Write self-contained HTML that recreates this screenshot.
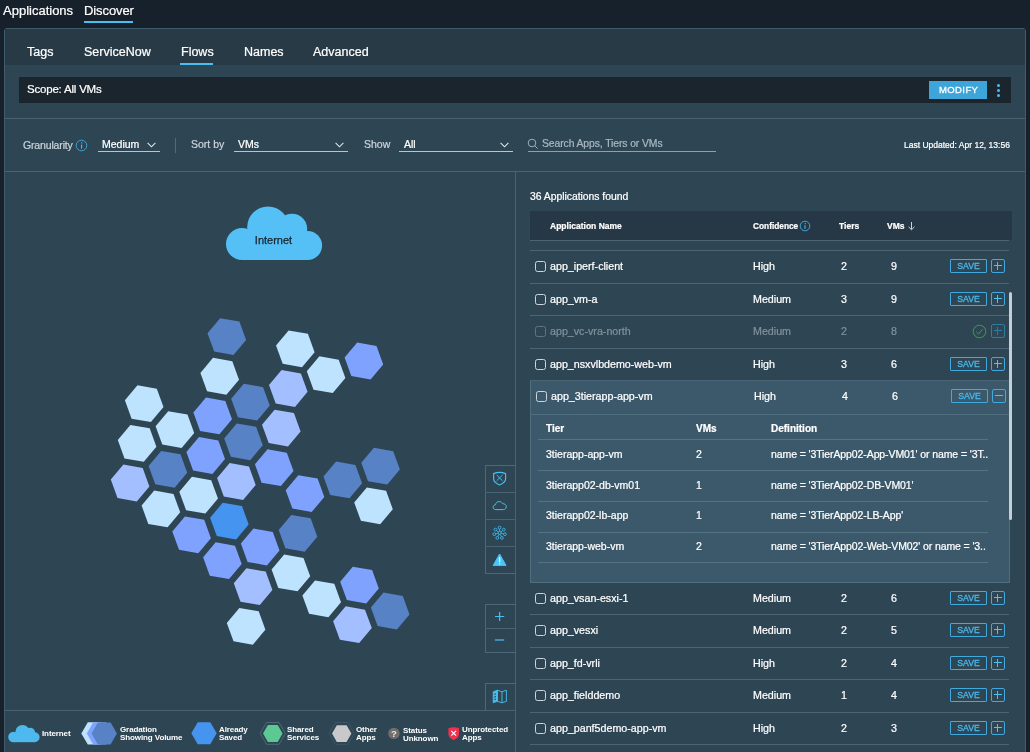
<!DOCTYPE html>
<html>
<head>
<meta charset="utf-8">
<title>Discover</title>
<style>
*{box-sizing:border-box;margin:0;padding:0}
html,body{width:1030px;height:752px;overflow:hidden;background:#17212b;font-family:"Liberation Sans",sans-serif;color:#fff}
.abs{position:absolute}
.t{position:absolute;white-space:nowrap;line-height:1;-webkit-text-stroke:.22px currentColor;will-change:transform}
#panel{position:absolute;left:4px;top:28px;width:1022px;height:740px;background:#2e4553;border:1px solid #425c6b;border-radius:3px 3px 0 0}
#tabrow{position:absolute;left:0;top:0;width:1020px;height:36px;background:#273a46}
.hl{position:absolute;height:1px;background:#4a6372}
.vl{position:absolute;width:1px;background:#4a6372}
.ul{position:absolute;height:1px;background:#b9c5cd}
.blue{background:#49bff0}
/* list */
.row{position:absolute;left:530px;width:479px;height:33px;border-top:1px solid #4a6676}
.row .t{font-size:10.7px;top:9.7px}
.cb{position:absolute;left:5px;top:9.7px;width:11px;height:11px;border:1px solid #ccd6dd;border-radius:2.5px}
.save{will-change:transform;position:absolute;left:420px;top:8px;width:37px;height:14px;border:1px solid #41a9de;border-radius:1px;color:#4ab8ec;font-size:8.7px;line-height:12.4px;text-align:center;letter-spacing:-.05px;-webkit-text-stroke:.3px #4ab8ec}
.pm{position:absolute;left:461px;top:7.8px;width:13.6px;height:14px;border:1px solid #41a9de;border-radius:2px}
.pm:before{content:"";position:absolute;left:1.8px;top:5.3px;width:8px;height:1.4px;background:#4cc2f5}
.pm.plus:after{content:"";position:absolute;left:5.1px;top:2px;width:1.4px;height:8px;background:#4cc2f5}
.dis .t{color:#7f919c}
.dis .cb{border-color:#5e7683}
.dis .pm{border-color:#2f7ba2}
.dis .pm:before,.dis .pm:after{background:#2f7ba2}
.sub{position:absolute;left:538px;width:450px;height:1px;background:#547383}
.st{font-size:10.5px}
.lg{will-change:transform;font-size:8px;font-weight:bold;line-height:8.3px;letter-spacing:-.1px;color:#fff;position:absolute;white-space:nowrap}
.tool{position:absolute;left:485px;width:31px;border:1px solid #4f6878;border-right:none}
</style>
</head>
<body>
<!-- top nav -->
<div class="t" style="left:3.3px;top:4px;font-size:13px">Applications</div>
<div class="t" style="left:84px;top:4px;font-size:13px;letter-spacing:-.1px">Discover</div>
<div class="abs blue" style="left:84px;top:21px;width:49px;height:2px"></div>

<div id="panel"><div id="tabrow"></div></div>

<!-- tabs -->
<div class="t" style="left:26.5px;top:46px;font-size:12.5px">Tags</div>
<div class="t" style="left:83.5px;top:46px;font-size:12.5px">ServiceNow</div>
<div class="t" style="left:181px;top:46px;font-size:12.5px">Flows</div>
<div class="t" style="left:244px;top:46px;font-size:12.5px">Names</div>
<div class="t" style="left:313px;top:46px;font-size:12.5px">Advanced</div>
<div class="abs blue" style="left:180px;top:63px;width:33px;height:2px"></div>

<!-- scope bar -->
<div class="abs" style="left:19px;top:77px;width:992px;height:26px;background:#1b252d"></div>
<div class="t" style="left:26.5px;top:84px;font-size:11.5px;letter-spacing:-.2px">Scope: All VMs</div>
<div class="abs" style="left:929px;top:81px;width:58px;height:18px;background:#3da5d9"></div>
<div class="t" style="left:938.5px;top:85px;font-size:9.5px;letter-spacing:.4px;-webkit-text-stroke:.3px #fff">MODIFY</div>
<div class="abs blue" style="left:997px;top:83.5px;width:3px;height:3px;border-radius:50%"></div>
<div class="abs blue" style="left:997px;top:88.7px;width:3px;height:3px;border-radius:50%"></div>
<div class="abs blue" style="left:997px;top:94px;width:3px;height:3px;border-radius:50%"></div>

<div class="hl" style="left:5px;top:118.4px;width:1020px"></div>

<!-- toolbar -->
<div class="t" style="left:23px;top:139.5px;font-size:10.5px;letter-spacing:-.15px;color:#c9d4db">Granularity</div>
<svg class="abs" style="left:74.5px;top:138.5px" width="13" height="13" viewBox="0 0 13 13"><circle cx="6.5" cy="6.5" r="5.3" fill="none" stroke="#3da5d9" stroke-width="1"/><rect x="6" y="5.6" width="1.1" height="4" fill="#49bff0"/><rect x="6.2" y="3.3" width="1.2" height="1.2" fill="#49bff0"/></svg>
<div class="t" style="left:102px;top:139px;font-size:10.5px">Medium</div>
<svg class="abs" style="left:147px;top:142px" width="9" height="6" viewBox="0 0 9 6"><path d="M.6.8 4.5 4.8 8.4.8" fill="none" stroke="#dfe6ea" stroke-width="1.1"/></svg>
<div class="ul" style="left:98px;top:151px;width:62px"></div>
<div class="vl" style="left:175px;top:138px;height:15px;background:#526b79"></div>
<div class="t" style="left:191px;top:139px;font-size:10.5px;color:#c9d4db">Sort by</div>
<div class="t" style="left:238px;top:139px;font-size:10.5px">VMs</div>
<svg class="abs" style="left:335px;top:142px" width="9" height="6" viewBox="0 0 9 6"><path d="M.6.8 4.5 4.8 8.4.8" fill="none" stroke="#dfe6ea" stroke-width="1.1"/></svg>
<div class="ul" style="left:234px;top:151px;width:114px"></div>
<div class="t" style="left:363.5px;top:139px;font-size:10.5px;color:#c9d4db">Show</div>
<div class="t" style="left:404px;top:139px;font-size:10.5px">All</div>
<svg class="abs" style="left:500px;top:142px" width="9" height="6" viewBox="0 0 9 6"><path d="M.6.8 4.5 4.8 8.4.8" fill="none" stroke="#dfe6ea" stroke-width="1.1"/></svg>
<div class="ul" style="left:399px;top:151px;width:114px"></div>
<svg class="abs" style="left:527px;top:138px" width="12" height="12" viewBox="0 0 12 12"><circle cx="5" cy="5" r="3.8" fill="none" stroke="#9fb0ba" stroke-width="1"/><path d="M7.8 7.8 10.6 10.6" stroke="#9fb0ba" stroke-width="1"/></svg>
<div class="t" style="left:542px;top:139px;font-size:10.4px;letter-spacing:-.1px;color:#a9b8c1">Search Apps, Tiers or VMs</div>
<div class="ul" style="left:528px;top:151px;width:188px;background:#8fa1ac"></div>
<div class="t" style="left:903.8px;top:141px;font-size:8.5px">Last Updated: Apr 12, 13:56</div>

<div class="hl" style="left:5px;top:171px;width:1020px"></div>
<div class="vl" style="left:515px;top:172px;height:580px"></div>

<!-- MAP -->
<svg class="abs" style="left:5px;top:172px;will-change:transform" width="510" height="540" viewBox="5 172 510 540" id="map">
<g id="cloud" fill="#55c0f5">
<circle cx="242" cy="244" r="16"/><circle cx="268" cy="227.2" r="20.8"/><circle cx="292" cy="229" r="15.2"/><circle cx="307.6" cy="245.5" r="14.5"/><rect x="242" y="236" width="66" height="24"/>
</g>
<text x="273.5" y="243.6" font-family="Liberation Sans, sans-serif" font-size="11" fill="#16242e" stroke="#16242e" stroke-width=".25" text-anchor="middle">Internet</text>
<g id="hexes">
<polygon fill="#5882c6" points="246.1,340.0 233.5,355.0 214.2,351.6 207.5,333.2 220.1,318.2 239.4,321.6"/>
<polygon fill="#bee3ff" points="314.6,352.2 302.0,367.2 282.7,363.8 276.0,345.4 288.6,330.4 307.9,333.8"/>
<polygon fill="#80a2ff" points="383.2,364.4 370.6,379.4 351.3,376.0 344.6,357.6 357.2,342.6 376.5,346.0"/>
<polygon fill="#bee3ff" points="239.0,379.7 226.4,394.7 207.1,391.3 200.4,372.9 213.0,357.8 232.3,361.2"/>
<polygon fill="#bee3ff" points="345.4,378.1 332.8,393.1 313.5,389.7 306.8,371.3 319.4,356.3 338.7,359.7"/>
<polygon fill="#a3bfff" points="307.6,391.8 295.0,406.9 275.7,403.5 269.0,385.0 281.6,370.0 300.9,373.4"/>
<polygon fill="#bee3ff" points="163.5,407.1 150.9,422.1 131.6,418.7 124.9,400.3 137.5,385.3 156.8,388.7"/>
<polygon fill="#5882c6" points="269.8,405.6 257.2,420.6 237.9,417.2 231.2,398.8 243.8,383.8 263.1,387.2"/>
<polygon fill="#80a2ff" points="232.0,419.3 219.4,434.3 200.1,430.9 193.4,412.5 206.0,397.5 225.3,400.9"/>
<polygon fill="#bee3ff" points="194.2,433.0 181.6,448.0 162.3,444.6 155.6,426.2 168.2,411.2 187.5,414.6"/>
<polygon fill="#a3bfff" points="300.6,431.5 288.0,446.5 268.7,443.1 262.0,424.7 274.6,409.7 293.9,413.1"/>
<polygon fill="#bee3ff" points="156.4,446.8 143.8,461.8 124.5,458.4 117.8,440.0 130.4,424.9 149.7,428.3"/>
<polygon fill="#5882c6" points="262.8,445.2 250.2,460.2 230.9,456.8 224.2,438.4 236.8,423.4 256.1,426.8"/>
<polygon fill="#80a2ff" points="225.0,458.9 212.4,474.0 193.1,470.6 186.4,452.1 199.0,437.1 218.3,440.5"/>
<polygon fill="#5882c6" points="187.2,472.7 174.6,487.7 155.3,484.3 148.6,465.9 161.2,450.9 180.5,454.3"/>
<polygon fill="#80a2ff" points="293.5,471.1 280.9,486.1 261.6,482.7 254.9,464.3 267.5,449.3 286.8,452.7"/>
<polygon fill="#5882c6" points="399.9,469.6 387.3,484.6 368.0,481.2 361.3,462.8 373.9,447.8 393.2,451.2"/>
<polygon fill="#a3bfff" points="149.4,486.4 136.8,501.4 117.5,498.0 110.8,479.6 123.4,464.6 142.7,468.0"/>
<polygon fill="#a3bfff" points="255.7,484.9 243.1,499.9 223.8,496.5 217.1,478.0 229.7,463.0 249.0,466.4"/>
<polygon fill="#5882c6" points="362.1,483.3 349.5,498.3 330.2,494.9 323.5,476.5 336.1,461.5 355.4,464.9"/>
<polygon fill="#bee3ff" points="218.0,498.6 205.4,513.6 186.1,510.2 179.3,491.8 191.9,476.8 211.2,480.2"/>
<polygon fill="#80a2ff" points="324.3,497.0 311.7,512.0 292.4,508.6 285.7,490.2 298.3,475.2 317.6,478.6"/>
<polygon fill="#bee3ff" points="180.2,512.3 167.6,527.3 148.3,523.9 141.6,505.5 154.2,490.5 173.5,493.9"/>
<polygon fill="#bee3ff" points="392.8,509.2 380.2,524.2 360.9,520.8 354.2,502.4 366.8,487.4 386.1,490.8"/>
<polygon fill="#4594f0" points="248.7,524.5 236.1,539.5 216.8,536.1 210.1,517.7 222.7,502.7 242.0,506.1"/>
<polygon fill="#80a2ff" points="210.9,538.2 198.3,553.2 179.0,549.8 172.3,531.4 184.9,516.4 204.2,519.8"/>
<polygon fill="#5882c6" points="317.3,536.7 304.7,551.7 285.4,548.3 278.7,529.9 291.3,514.9 310.6,518.3"/>
<polygon fill="#80a2ff" points="279.5,550.4 266.9,565.4 247.6,562.0 240.9,543.6 253.5,528.6 272.8,532.0"/>
<polygon fill="#80a2ff" points="241.7,564.1 229.1,579.1 209.8,575.7 203.1,557.3 215.7,542.3 235.0,545.7"/>
<polygon fill="#bee3ff" points="310.2,576.3 297.6,591.3 278.3,587.9 271.6,569.5 284.2,554.5 303.5,557.9"/>
<polygon fill="#80a2ff" points="378.8,588.5 366.2,603.5 346.9,600.1 340.2,581.7 352.8,566.7 372.1,570.1"/>
<polygon fill="#a3bfff" points="272.4,590.0 259.8,605.1 240.5,601.7 233.8,583.2 246.4,568.2 265.7,571.6"/>
<polygon fill="#bee3ff" points="341.0,602.2 328.4,617.2 309.1,613.8 302.4,595.4 315.0,580.4 334.3,583.8"/>
<polygon fill="#5882c6" points="409.5,614.4 396.9,629.4 377.6,626.0 370.9,607.6 383.5,592.6 402.8,596.0"/>
<polygon fill="#bee3ff" points="265.4,629.7 252.8,644.7 233.5,641.3 226.8,622.9 239.4,607.9 258.7,611.3"/>
<polygon fill="#a3bfff" points="371.8,628.1 359.2,643.1 339.9,639.7 333.1,621.3 345.7,606.3 365.0,609.7"/>
</g>
</svg>

<!-- LIST placeholder -->
<div id="list">
<div class="t" style="left:530px;top:191.7px;font-size:10.4px;letter-spacing:-.03px">36 Applications found</div>
<div class="abs" style="left:530px;top:211px;width:482px;height:29px;background:#263845"></div>
<div class="abs" style="left:530px;top:240px;width:479px;height:1px;background:#4a6676"></div>
<div class="t" style="left:550px;top:222px;font-size:8.5px;font-weight:bold">Application Name</div>
<div class="t" style="left:752.5px;top:222px;font-size:8.3px;font-weight:bold">Confidence</div>
<svg class="abs" style="left:799px;top:220px" width="12" height="12" viewBox="0 0 12 12"><circle cx="6" cy="6" r="4.8" fill="none" stroke="#3da5d9" stroke-width="1"/><rect x="5.5" y="5.2" width="1" height="3.6" fill="#49bff0"/><rect x="5.7" y="3.1" width="1.1" height="1.1" fill="#49bff0"/></svg>
<div class="t" style="left:839px;top:222px;font-size:8.5px;font-weight:bold">Tiers</div>
<div class="t" style="left:887px;top:222px;font-size:8.5px;font-weight:bold">VMs</div>
<svg class="abs" style="left:907px;top:221px" width="9" height="10" viewBox="0 0 9 10"><path d="M4.5 1V8.5M1.5 5.8 4.5 8.7 7.5 5.8" fill="none" stroke="#c9d4db" stroke-width="1"/></svg>
<div class="row " style="top:250px"><div class="cb" style="left:5px"></div><div class="t" style="left:20px">app_iperf-client</div><div class="t" style="left:223px">High</div><div class="t" style="left:311px">2</div><div class="t" style="left:361px">9</div><div class="save" style="left:420px">SAVE</div><div class="pm plus" style="left:461px"></div></div>
<div class="row " style="top:283px"><div class="cb" style="left:5px"></div><div class="t" style="left:20px">app_vm-a</div><div class="t" style="left:223px">Medium</div><div class="t" style="left:311px">3</div><div class="t" style="left:361px">9</div><div class="save" style="left:420px">SAVE</div><div class="pm plus" style="left:461px"></div></div>
<div class="row dis" style="top:315px"><div class="cb" style="left:5px"></div><div class="t" style="left:20px">app_vc-vra-north</div><div class="t" style="left:223px">Medium</div><div class="t" style="left:311px">2</div><div class="t" style="left:361px">8</div><svg class="abs" style="left:442px;top:7.5px" width="15" height="15" viewBox="0 0 15 15"><circle cx="7.5" cy="7.5" r="6.3" fill="none" stroke="#3f9a55" stroke-width="1"/><path d="M4.3 7.8 6.7 10 10.6 5.2" fill="none" stroke="#3f9a55" stroke-width="1"/></svg><div class="pm plus" style="left:461px"></div></div>
<div class="row " style="top:348px"><div class="cb" style="left:5px"></div><div class="t" style="left:20px">app_nsxvlbdemo-web-vm</div><div class="t" style="left:223px">High</div><div class="t" style="left:311px">3</div><div class="t" style="left:361px">6</div><div class="save" style="left:420px">SAVE</div><div class="pm plus" style="left:461px"></div></div>
<div class="row " style="top:582px"><div class="cb" style="left:5px"></div><div class="t" style="left:20px">app_vsan-esxi-1</div><div class="t" style="left:223px">Medium</div><div class="t" style="left:311px">2</div><div class="t" style="left:361px">6</div><div class="save" style="left:420px">SAVE</div><div class="pm plus" style="left:461px"></div></div>
<div class="row " style="top:614px"><div class="cb" style="left:5px"></div><div class="t" style="left:20px">app_vesxi</div><div class="t" style="left:223px">Medium</div><div class="t" style="left:311px">2</div><div class="t" style="left:361px">5</div><div class="save" style="left:420px">SAVE</div><div class="pm plus" style="left:461px"></div></div>
<div class="row " style="top:647px"><div class="cb" style="left:5px"></div><div class="t" style="left:20px">app_fd-vrli</div><div class="t" style="left:223px">High</div><div class="t" style="left:311px">2</div><div class="t" style="left:361px">4</div><div class="save" style="left:420px">SAVE</div><div class="pm plus" style="left:461px"></div></div>
<div class="row " style="top:679px"><div class="cb" style="left:5px"></div><div class="t" style="left:20px">app_fielddemo</div><div class="t" style="left:223px">Medium</div><div class="t" style="left:311px">1</div><div class="t" style="left:361px">4</div><div class="save" style="left:420px">SAVE</div><div class="pm plus" style="left:461px"></div></div>
<div class="row " style="top:712px"><div class="cb" style="left:5px"></div><div class="t" style="left:20px">app_panf5demo-app-vm</div><div class="t" style="left:223px">High</div><div class="t" style="left:311px">2</div><div class="t" style="left:361px">3</div><div class="save" style="left:420px">SAVE</div><div class="pm plus" style="left:461px"></div></div>
<div class="abs" style="left:530px;top:380px;width:480px;height:203px;background:#3b596a;border:1px solid #4f6e7e"></div>
<div class="row exp" style="top:380px"><div class="cb" style="left:6px"></div><div class="t" style="left:21px">app_3tierapp-app-vm</div><div class="t" style="left:224px">High</div><div class="t" style="left:312px">4</div><div class="t" style="left:362px">6</div><div class="save" style="left:421px">SAVE</div><div class="pm " style="left:462px"></div></div>
<div class="abs" style="left:531px;top:414px;width:478px;height:1px;background:#4f6e7e"></div>
<div class="t" style="left:546px;top:423.5px;font-size:10px;font-weight:bold">Tier</div>
<div class="t" style="left:696px;top:423.5px;font-size:10px;font-weight:bold">VMs</div>
<div class="t" style="left:771px;top:423.5px;font-size:10px;font-weight:bold">Definition</div>
<div class="sub" style="top:439px"></div>
<div class="sub" style="top:470px"></div>
<div class="sub" style="top:501px"></div>
<div class="sub" style="top:531.5px"></div>
<div class="sub" style="top:562px"></div>
<div class="t st" style="left:546px;top:448.5px">3tierapp-app-vm</div>
<div class="t st" style="left:696px;top:448.5px">2</div>
<div class="t st" style="left:770.5px;top:448.5px;letter-spacing:-.1px">name = '3TierApp02-App-VM01' or name = '3T..</div>
<div class="t st" style="left:546px;top:479.5px">3tierapp02-db-vm01</div>
<div class="t st" style="left:696px;top:479.5px">1</div>
<div class="t st" style="left:770.5px;top:479.5px;letter-spacing:-.1px">name = '3TierApp02-DB-VM01'</div>
<div class="t st" style="left:546px;top:510.0px">3tierapp02-lb-app</div>
<div class="t st" style="left:696px;top:510.0px">1</div>
<div class="t st" style="left:770.5px;top:510.0px;letter-spacing:-.1px">name = '3TierApp02-LB-App'</div>
<div class="t st" style="left:546px;top:540.5px">3tierapp-web-vm</div>
<div class="t st" style="left:696px;top:540.5px">2</div>
<div class="t st" style="left:770.5px;top:540.5px;letter-spacing:-.1px">name = '3TierApp02-Web-VM02' or name = '3..</div>
<div class="abs" style="left:530px;top:744px;width:479px;height:1px;background:#4a6676"></div>
<div class="abs" style="left:1009px;top:292px;width:3px;height:228px;background:#c5ced4;border-radius:1.5px"></div>
</div><!--endlist-->

<!-- LEGEND placeholder -->
<div id="legend">
<div class="hl" style="left:5px;top:710px;width:511px"></div>
<div class="tool" style="top:465px;height:108.5px"></div>
<div class="hl" style="left:485px;top:492px;width:30px"></div>
<div class="hl" style="left:485px;top:519px;width:30px"></div>
<div class="hl" style="left:485px;top:546px;width:30px"></div>
<div class="tool" style="top:603.5px;height:49.5px"></div>
<div class="hl" style="left:485px;top:627.5px;width:30px"></div>
<div class="tool" style="top:683px;height:28px;border-bottom:none"></div>
<svg class="abs" style="left:0;top:0;will-change:transform" width="1030" height="752" viewBox="0 0 1030 752"><path d="M493.6 473.6 Q499.6 471.3 505.6 473.6 V478.6 C505.6 481.8 502.8 483.8 499.6 485 C496.4 483.8 493.6 481.8 493.6 478.6Z" fill="none" stroke="#49bff0" stroke-width="1.15"/><path d="M496.7 475 502.5 480.8 M502.5 475 496.7 480.8" stroke="#49bff0" stroke-width="1" fill="none"/><path d="M495.8 509.6 C494 509.6 493.1 508.4 493.1 507.2 C493.1 505.8 494.2 504.8 495.5 504.8 C495.7 502.8 497.3 501.6 499.2 501.6 C500.8 501.6 502 502.4 502.6 503.7 C504.6 503.5 506.3 504.9 506.3 506.7 C506.3 508.4 505 509.6 503.3 509.6Z" fill="none" stroke="#49bff0" stroke-width="1"/><circle cx="499.6" cy="533" r="1.6" fill="none" stroke="#49bff0" stroke-width=".9"/><circle cx="499.6" cy="527.6" r="1.4" fill="none" stroke="#49bff0" stroke-width=".8"/><path d="M499.6 531.2 499.6 529.0" stroke="#49bff0" stroke-width=".8"/><circle cx="503.8" cy="529.6" r="1.4" fill="none" stroke="#49bff0" stroke-width=".8"/><path d="M501.0 531.9 502.7 530.5" stroke="#49bff0" stroke-width=".8"/><circle cx="504.9" cy="534.2" r="1.4" fill="none" stroke="#49bff0" stroke-width=".8"/><path d="M501.4 533.4 503.5 533.9" stroke="#49bff0" stroke-width=".8"/><circle cx="501.9" cy="537.9" r="1.4" fill="none" stroke="#49bff0" stroke-width=".8"/><path d="M500.4 534.6 501.3 536.6" stroke="#49bff0" stroke-width=".8"/><circle cx="497.3" cy="537.9" r="1.4" fill="none" stroke="#49bff0" stroke-width=".8"/><path d="M498.8 534.6 497.9 536.6" stroke="#49bff0" stroke-width=".8"/><circle cx="494.3" cy="534.2" r="1.4" fill="none" stroke="#49bff0" stroke-width=".8"/><path d="M497.8 533.4 495.7 533.9" stroke="#49bff0" stroke-width=".8"/><circle cx="495.4" cy="529.6" r="1.4" fill="none" stroke="#49bff0" stroke-width=".8"/><path d="M498.2 531.9 496.5 530.5" stroke="#49bff0" stroke-width=".8"/><path d="M499.6 554 506 565.4 H493.2Z" fill="#49c6f8" stroke="#49c6f8" stroke-width="1" stroke-linejoin="round"/><rect x="499.1" y="557.2" width="1.1" height="5" fill="#fff"/><rect x="499.1" y="563.3" width="1.1" height="1.2" fill="#fff"/><path d="M495 616.5 H504.2 M499.6 612 V621" stroke="#49bff0" stroke-width="1.2"/><path d="M495 640 H504.2" stroke="#49bff0" stroke-width="1.2"/><path d="M493.2 691.8 497.3 690.2 V701.3 L493.2 702.8Z" fill="#49bff0" stroke="#49bff0" stroke-width=".8"/><path d="M497.3 690.2 502 691.8 V702.8 L497.3 701.3Z M502 691.8 506.4 690.2 V701.3 L502 702.8" fill="none" stroke="#49bff0" stroke-width=".9"/><rect x="494.5" y="693.4" width="1.3" height="1.5" fill="#2e4553"/><rect x="494.5" y="696" width="1.3" height="1.5" fill="#2e4553"/><rect x="494.5" y="698.6" width="1.3" height="1.5" fill="#2e4553"/><g fill="#4db9ef"><circle cx="13.4" cy="737" r="5.2"/><circle cx="22.5" cy="732.2" r="7.2"/><circle cx="30.3" cy="732.6" r="4.8"/><circle cx="34.6" cy="737.2" r="5"/><rect x="13.4" y="734" width="21.2" height="8.2"/></g><polygon fill="#bee3ff" points="107.1,733.4 100.7,744.6 87.8,744.6 81.3,733.4 87.8,722.2 100.7,722.2"/><polygon fill="#80a2ff" points="112.6,733.4 106.2,744.6 93.2,744.6 86.8,733.4 93.2,722.2 106.2,722.2"/><polygon fill="#5882c6" points="116.9,733.4 110.6,744.4 97.9,744.4 91.5,733.4 97.8,722.4 110.6,722.4"/><polygon fill="#4594f0" points="216.7,733.2 210.3,744.2 197.7,744.2 191.3,733.2 197.7,722.2 210.3,722.2"/><polygon fill="none" stroke="#506876" stroke-width="1" points="285.4,733.4 279.1,744.3 266.5,744.3 260.2,733.4 266.5,722.5 279.1,722.5"/><polygon fill="#5cc892" points="282.6,733.6 277.7,742.1 267.9,742.1 263.0,733.6 267.9,725.1 277.7,725.1"/><polygon fill="none" stroke="#3d5665" stroke-width="1" points="354.3,733.4 348.0,744.3 335.4,744.3 329.1,733.4 335.4,722.5 348.0,722.5"/><polygon fill="#c9c9cb" points="351.4,733.6 346.6,742.0 336.8,742.0 332.0,733.6 336.8,725.2 346.6,725.2"/><circle cx="393.9" cy="733.4" r="5.7" fill="#706d6b"/><text x="393.9" y="736.7" font-family="Liberation Sans, sans-serif" font-size="9.5" font-weight="bold" fill="#e6e6e6" text-anchor="middle">?</text><path d="M448.4 728.2 Q453.7 726.5 459 728.2 V734 C459 737 456.8 738.8 453.7 740 C450.6 738.8 448.4 737 448.4 734Z" fill="#f0304e"/><path d="M451.3 730.8 456.1 735.6 M456.1 730.8 451.3 735.6" stroke="#fff" stroke-width="1.1"/></svg>
<div class="lg" style="left:42px;top:730.4px">Internet</div>
<div class="lg" style="left:119.5px;top:726.1px">Gradation<br>Showing Volume</div>
<div class="lg" style="left:219px;top:726.2px">Already<br>Saved</div>
<div class="lg" style="left:287.3px;top:726.3px">Shared<br>Services</div>
<div class="lg" style="left:355.7px;top:725.8px">Other<br>Apps</div>
<div class="lg" style="left:403px;top:727px">Status<br>Unknown</div>
<div class="lg" style="left:461.8px;top:725.8px">Unprotected<br>Apps</div>
</div><!--endlegend-->
</body>
</html>
